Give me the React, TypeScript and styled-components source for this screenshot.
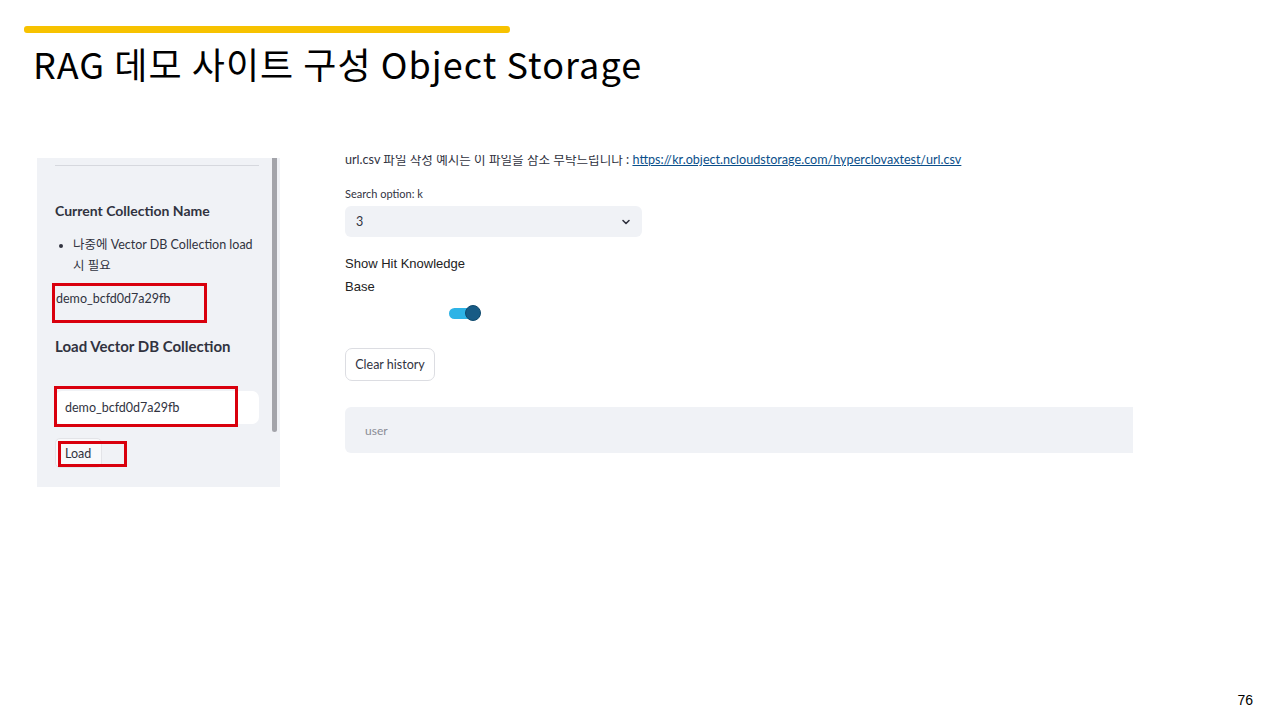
import styled, { createGlobalStyle } from 'styled-components';

const colors = {
  panel: '#f0f2f6',
  red: '#d9000d',
  yellow: '#f7c200',
  text: '#31333f',
};

const GlobalStyle = createGlobalStyle`
  html, body { margin: 0; padding: 0; background: #fff; }
  body { width: 1280px; height: 720px; overflow: hidden; }
`;

const Slide = styled.div`
  position: relative;
  width: 1280px;
  height: 720px;
  box-sizing: border-box;
  padding: 26px 0 0 24px;
  font-family: 'Noto Sans', 'Noto Sans CJK KR', sans-serif;
`;

const AccentBar = styled.div`
  width: 486px;
  height: 7px;
  border-radius: 3px;
  background: ${colors.yellow};
`;

const Title = styled.h1`
  margin: 6px 0 0 9px;
  font-family: 'Noto Sans CJK KR', 'Noto Sans', sans-serif;
  font-weight: 400;
  font-size: 36px;
  line-height: 48px;
  color: #000;
  letter-spacing: 1.05px;
  white-space: nowrap;
`;

const Capture = styled.div`
  display: flex;
  margin-top: 68px;
  margin-left: 13px;
`;

const Sidebar = styled.div`
  position: relative;
  width: 243px;
  height: 329px;
  margin-top: 3px;
  background: ${colors.panel};
  box-sizing: border-box;
  padding: 7px 0 0 18px;
  font-family: 'Lato', 'Noto Sans CJK KR', sans-serif;
  color: ${colors.text};
`;

const Scrollbar = styled.div`
  position: absolute;
  right: 3px;
  top: 0;
  width: 5px;
  height: 274px;
  border-radius: 0 0 3px 3px;
  background: #a3a4aa;
`;

const Divider = styled.div`
  width: 204px;
  height: 1px;
  background: #d6d8de;
`;

const SideHeading = styled.div<{ $size: number; $top: number }>`
  margin-top: ${p => p.$top}px;
  font-weight: 700;
  font-size: ${p => p.$size}px;
  line-height: 20px;
  color: ${colors.text};
`;

const BulletList = styled.ul`
  margin: 13px 0 0 0;
  padding: 0 0 0 18px;
  font-size: 12.5px;
  line-height: 21px;
  width: 180px;
  li::marker { font-size: 11px; }
`;

const Annotated = styled.div`
  position: relative;
  display: flow-root;
`;

const RedBox = styled.div<{ $l: number; $t: number; $w: number; $h: number }>`
  position: absolute;
  left: ${p => p.$l}px;
  top: ${p => p.$t}px;
  width: ${p => p.$w}px;
  height: ${p => p.$h}px;
  border: 3px solid ${colors.red};
  box-sizing: border-box;
  pointer-events: none;
`;

const PlainName = styled.div`
  margin-top: 7px;
  height: 40px;
  box-sizing: border-box;
  padding: 7px 0 0 1px;
  font-size: 12.5px;
  line-height: 18px;
`;

const TextField = styled.div`
  margin-top: 35px;
  width: 204px;
  height: 33px;
  background: #fff;
  border-radius: 7px;
  display: flex;
  align-items: center;
  padding-left: 10px;
  box-sizing: border-box;
  font-size: 12.5px;
`;

const SmallButton = styled.div`
  margin-top: 14px;
  width: 47px;
  height: 30px;
  background: #f8f9fb;
  border: 1px solid #e3e4e8;
  border-radius: 5px;
  box-sizing: border-box;
  display: flex;
  align-items: center;
  padding-left: 9px;
  font-size: 12.5px;
`;

const Main = styled.div`
  margin-left: 65px;
  width: 800px;
  height: 332px;
  overflow: hidden;
  font-family: 'Lato', 'Noto Sans CJK KR', sans-serif;
  color: ${colors.text};
`;

const InfoLine = styled.div`
  margin-top: -4px;
  font-size: 12.6px;
  line-height: 18px;
  white-space: nowrap;
  a { color: #0b4f8a; text-decoration: underline; }
`;

const FieldLabel = styled.div`
  margin-top: 18px;
  font-size: 11px;
  line-height: 14px;
`;

const Select = styled.div`
  margin-top: 5px;
  width: 297px;
  height: 31px;
  border-radius: 6px;
  background: ${colors.panel};
  display: flex;
  align-items: center;
  justify-content: space-between;
  padding: 0 11px;
  box-sizing: border-box;
  font-size: 12.5px;
`;

const ToggleLabel = styled.div`
  margin-top: 15px;
  width: 130px;
  font-family: 'Liberation Sans', Arial, sans-serif;
  font-size: 13px;
  line-height: 23px;
  color: #222;
`;

const ToggleRow = styled.div`
  margin: 7px 0 0 104px;
  position: relative;
  width: 32px;
  height: 17px;
`;

const Track = styled.div`
  position: absolute;
  left: 0;
  top: 3px;
  width: 26px;
  height: 11px;
  border-radius: 6px;
  background: #2db3e6;
`;

const Thumb = styled.div`
  position: absolute;
  right: 0;
  top: 0;
  width: 16px;
  height: 16px;
  border-radius: 50%;
  background: #175b85;
  border: 1px solid #0f4a6e;
  box-sizing: border-box;
`;

const GhostButton = styled.div`
  margin-top: 26px;
  width: 90px;
  height: 33px;
  border: 1px solid #dcdde2;
  border-radius: 7px;
  box-sizing: border-box;
  display: flex;
  align-items: center;
  justify-content: center;
  font-size: 12.5px;
`;

const ChatInput = styled.div`
  margin-top: 26px;
  width: 788px;
  height: 46px;
  border-radius: 6px 0 0 6px;
  background: ${colors.panel};
  display: flex;
  align-items: center;
  padding-left: 20px;
  box-sizing: border-box;
  font-size: 12px;
  color: #8a8c95;
`;

const PageNumber = styled.div`
  position: absolute;
  right: 27px;
  bottom: 12px;
  font-family: 'Liberation Sans', Arial, sans-serif;
  font-size: 14px;
  color: #000;
`;

function Chevron() {
  return (
    <svg width="10" height="10" viewBox="0 0 10 10">
      <path d="M2 3.5 L5 6.5 L8 3.5" fill="none" stroke="#31333f" strokeWidth="1.6" strokeLinecap="round" strokeLinejoin="round" />
    </svg>
  );
}

export default function App() {
  return (
    <>
      <GlobalStyle />
      <Slide>
        <AccentBar />
        <Title>RAG 데모 사이트 구성 Object Storage</Title>
        <Capture>
          <Sidebar>
            <Scrollbar />
            <Divider />
            <SideHeading $size={14} $top={35}>Current Collection Name</SideHeading>
            <BulletList>
              <li>나중에 Vector DB Collection load 시 필요</li>
            </BulletList>
            <Annotated>
              <PlainName>demo_bcfd0d7a29fb</PlainName>
              <RedBox $l={-3} $t={7} $w={155} $h={40} />
            </Annotated>
            <SideHeading $size={15} $top={13}>Load Vector DB Collection</SideHeading>
            <Annotated>
              <TextField>demo_bcfd0d7a29fb</TextField>
              <RedBox $l={-1} $t={30} $w={184} $h={41} />
            </Annotated>
            <Annotated>
              <SmallButton>Load</SmallButton>
              <RedBox $l={3} $t={17} $w={69} $h={26} />
            </Annotated>
          </Sidebar>
          <Main>
            <InfoLine>
              url.csv 파일 작성 예시는 이 파일을 참조 부탁드립니다 :{' '}
              <a>https://kr.object.ncloudstorage.com/hyperclovaxtest/url.csv</a>
            </InfoLine>
            <FieldLabel>Search option: k</FieldLabel>
            <Select>
              <span>3</span>
              <Chevron />
            </Select>
            <ToggleLabel>Show Hit Knowledge Base</ToggleLabel>
            <ToggleRow>
              <Track />
              <Thumb />
            </ToggleRow>
            <GhostButton>Clear history</GhostButton>
            <ChatInput>user</ChatInput>
          </Main>
        </Capture>
        <PageNumber>76</PageNumber>
      </Slide>
    </>
  );
}
